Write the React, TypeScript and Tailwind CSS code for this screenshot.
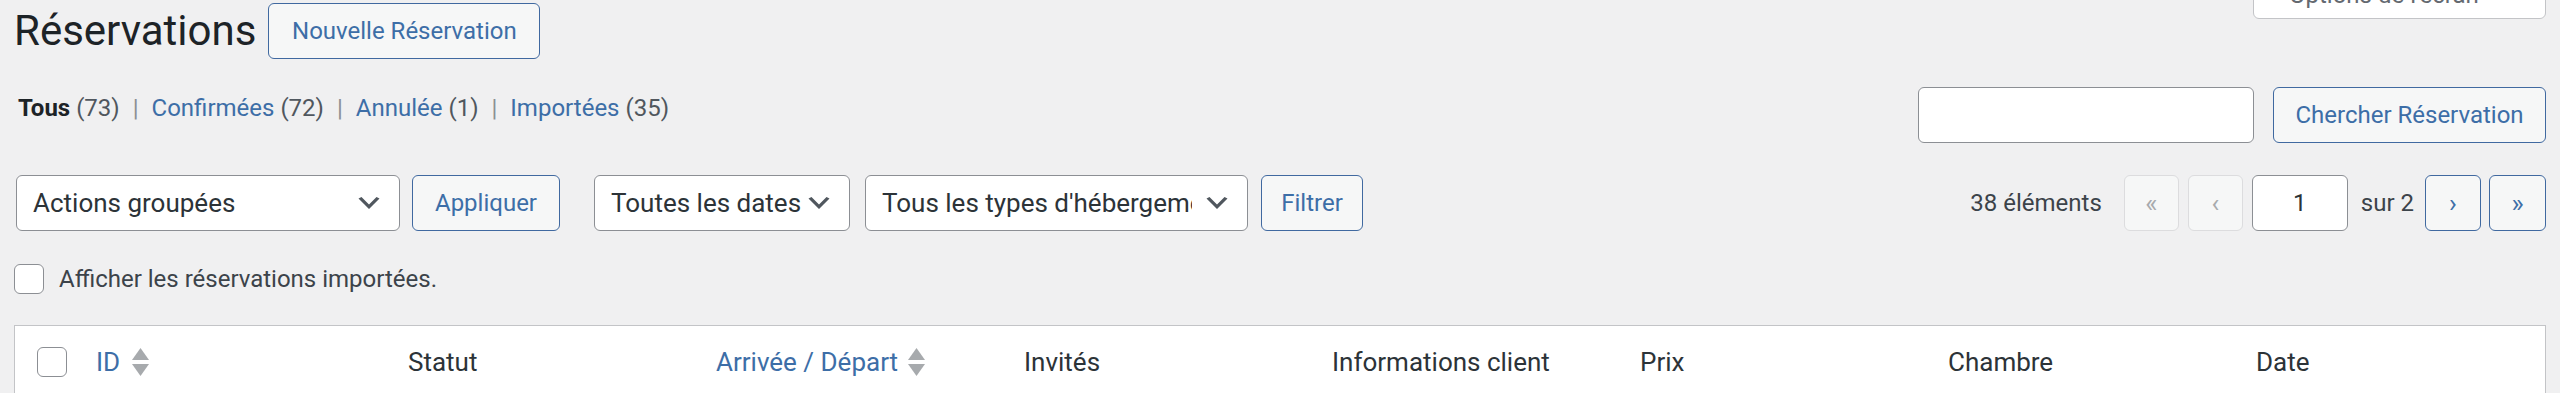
import React from "react";

function Chevron() {
  return (
    <svg viewBox="0 0 20 20" className="h-[30px] w-[30px] shrink-0" fill="#50575e">
      <path d="M5 6l5 5 5-5 2 1-7 7-7-7 2-1z" />
    </svg>
  );
}

function SortArrows() {
  return (
    <svg width="17" height="28" viewBox="0 0 17 28" className="shrink-0">
      <polygon points="8.5,0 17,12 0,12" fill="#a7aaad" />
      <polygon points="0,16 17,16 8.5,28" fill="#a7aaad" />
    </svg>
  );
}

function Select({ label, className, textClass = "" }: { label: string; className: string; textClass?: string }) {
  return (
    <div
      className={`flex h-[56px] items-center justify-between rounded-[6px] border border-[#8c8f94] bg-white pl-[16px] pr-[15px] text-[26px] text-[#2c3338] ${className}`}
    >
      <span className={`min-w-0 flex-1 overflow-hidden whitespace-nowrap ${textClass}`}>{label}</span>
      <Chevron />
    </div>
  );
}

function Button({ children, className }: { children: React.ReactNode; className: string }) {
  return (
    <div
      className={`flex h-[56px] items-center justify-center rounded-[6px] border border-[#4069a0] bg-[#f6f7f7] text-[24px] text-[#3d6ea7] ${className}`}
    >
      {children}
    </div>
  );
}

function Checkbox() {
  return <div className="h-[30px] w-[30px] shrink-0 rounded-[6px] border border-[#8c8f94] bg-white" />;
}

function Sep() {
  return <span className="px-[13px] text-[#8c8f94]">|</span>;
}

const columns = ["Statut", "Arrivée / Départ", "Invités", "Informations client", "Prix", "Chambre", "Date"];

export default function App() {
  return (
    <div className="relative h-[393px] w-[2560px] overflow-hidden bg-[#f0f0f1] px-[14px] font-['Roboto',sans-serif] text-[24px] leading-[36px] text-[#3c434a]">
      {/* Options de l'écran tab */}
      <div className="absolute right-[14px] top-[-40px] flex h-[59px] w-[293px] items-end rounded-b-[6px] border border-[#c3c4c7] bg-white pb-[5px] pl-[35px] text-[#646970]">
        Options de l'écran
      </div>

      {/* title */}
      <div className="flex items-start gap-[12px] pt-[3px]">
        <h1 className="text-[42px] leading-[56px] text-[#1d2327]">Réservations</h1>
        <Button className="w-[272px]">Nouvelle Réservation</Button>
      </div>

      {/* views + search */}
      <div className="mt-[28px] flex items-start justify-between">
        <div className="mt-[3px] whitespace-nowrap pl-[4px]">
          <span className="font-bold text-[#1d2327]">Tous</span> <span className="text-[#50575e]">(73)</span>
          <Sep />
          <span className="text-[#3d6ea7]">Confirmées</span> <span className="text-[#50575e]">(72)</span>
          <Sep />
          <span className="text-[#3d6ea7]">Annulée</span> <span className="text-[#50575e]">(1)</span>
          <Sep />
          <span className="text-[#3d6ea7]">Importées</span> <span className="text-[#50575e]">(35)</span>
        </div>
        <div className="flex items-center gap-[19px]">
          <div className="h-[56px] w-[336px] rounded-[6px] border border-[#8c8f94] bg-white" />
          <Button className="w-[273px]">Chercher Réservation</Button>
        </div>
      </div>

      {/* tablenav */}
      <div className="mt-[32px] flex items-center justify-between pl-[2px]">
        <div className="flex items-center">
          <Select label="Actions groupées" className="w-[384px]" />
          <Button className="ml-[12px] w-[148px]">Appliquer</Button>
          <Select label="Toutes les dates" className="ml-[34px] w-[256px]" />
          <Select label="Tous les types d'hébergement" className="ml-[15px] w-[383px]" textClass="mr-[10px]" />
          <Button className="ml-[13px] w-[102px]">Filtrer</Button>
        </div>
        <div className="flex items-center text-[#3c434a]">
          <span className="mr-[22px]">38 éléments</span>
          <div className="flex h-[56px] w-[55px] items-center justify-center rounded-[6px] border border-[#dcdcde] bg-[#f6f7f7] text-[26px] text-[#a7aaad]">
            «
          </div>
          <div className="ml-[9px] flex h-[56px] w-[55px] items-center justify-center rounded-[6px] border border-[#dcdcde] bg-[#f6f7f7] text-[26px] text-[#a7aaad]">
            ‹
          </div>
          <div className="ml-[9px] flex h-[56px] w-[96px] items-center justify-center rounded-[6px] border border-[#8c8f94] bg-white text-[#2c3338]">
            1
          </div>
          <span className="ml-[13px] mr-[11px]">sur 2</span>
          <Button className="w-[56px] text-[26px]">›</Button>
          <Button className="ml-[8px] w-[57px] text-[26px]">»</Button>
        </div>
      </div>

      {/* imported toggle */}
      <div className="mt-[33px] flex h-[30px] items-center gap-[15px]">
        <Checkbox />
        <span>Afficher les réservations importées.</span>
      </div>

      {/* table header */}
      <div className="mt-[31px] border border-[#c3c4c7] bg-white">
        <div className="grid h-[72px] grid-cols-[62px_312px_repeat(7,minmax(0,1fr))] items-center text-[26px] text-[#2c3338]">
          <div className="pl-[22px]">
            <Checkbox />
          </div>
          <div className="flex items-center gap-[12px] pl-[19px] text-[#3d6ea7]">
            ID
            <SortArrows />
          </div>
          {columns.map((c) =>
            c === "Arrivée / Départ" ? (
              <div key={c} className="flex items-center gap-[10px] pl-[19px] text-[#3d6ea7]">
                {c}
                <SortArrows />
              </div>
            ) : (
              <div key={c} className="pl-[19px]">
                {c}
              </div>
            )
          )}
        </div>
      </div>
    </div>
  );
}
